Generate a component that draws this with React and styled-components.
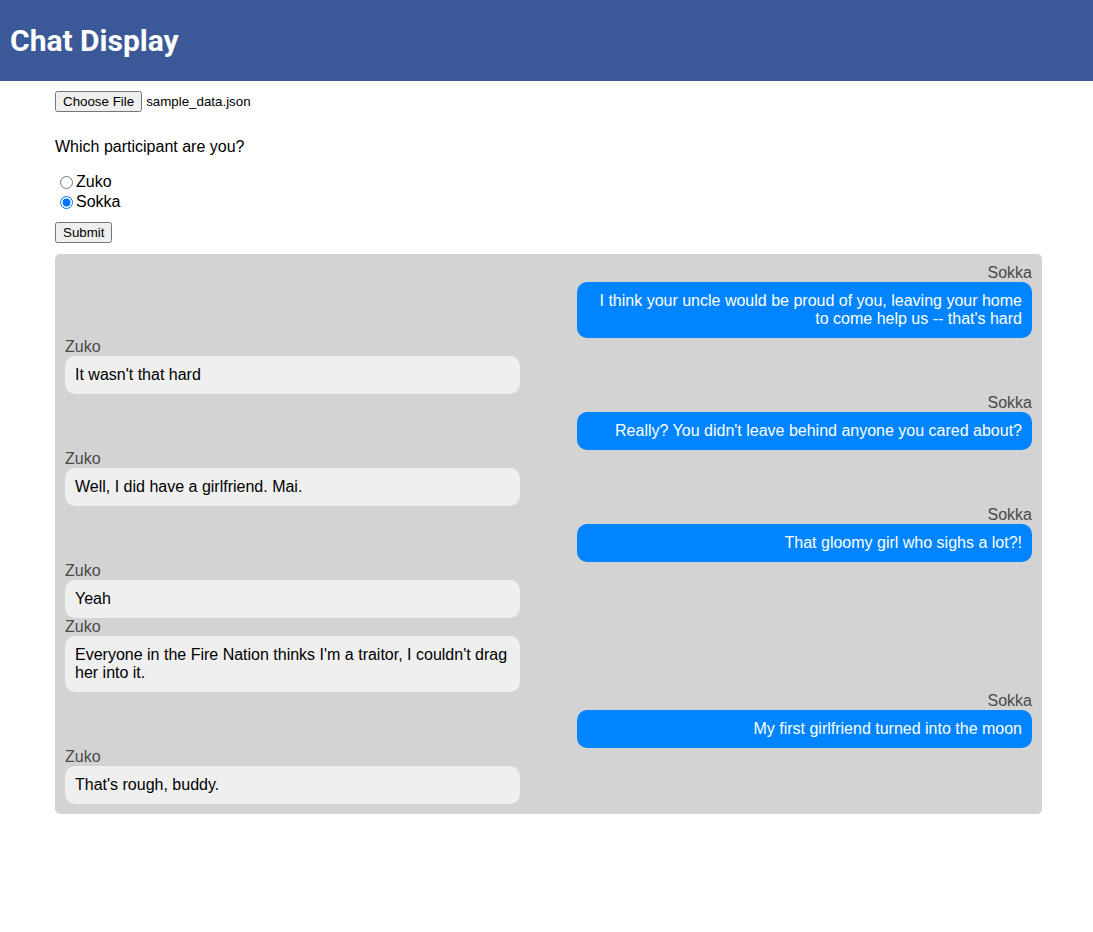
import React from 'react';
import styled, { createGlobalStyle } from 'styled-components';

const messages = [
    { sender: 'Sokka', text: "I think your uncle would be proud of you, leaving your home to come help us -- that's hard" },
    { sender: 'Zuko', text: "It wasn't that hard" },
    { sender: 'Sokka', text: "Really? You didn't leave behind anyone you cared about?" },
    { sender: 'Zuko', text: 'Well, I did have a girlfriend. Mai.' },
    { sender: 'Sokka', text: 'That gloomy girl who sighs a lot?!' },
    { sender: 'Zuko', text: 'Yeah' },
    { sender: 'Zuko', text: "Everyone in the Fire Nation thinks I'm a traitor, I couldn't drag her into it." },
    { sender: 'Sokka', text: 'My first girlfriend turned into the moon' },
    { sender: 'Zuko', text: "That's rough, buddy." },
];

const me = 'Sokka';

export default () => {
    return (
        <>
            <GlobalStyle />
            <Header>
                <Title>Chat Display</Title>
            </Header>
            <Main>
                <FileRow>
                    <FileButton type="button">Choose File</FileButton>
                    <FileName>sample_data.json</FileName>
                </FileRow>
                <Prompt>Which participant are you?</Prompt>
                <RadioList>
                    <label><input type="radio" name="who" value="Zuko" />Zuko</label>
                    <label><input type="radio" name="who" value="Sokka" defaultChecked />Sokka</label>
                </RadioList>
                <SubmitButton type="button">Submit</SubmitButton>
                <ChatBox>
                    {messages.map((m, i) => (
                        <Message key={i} mine={m.sender === me ? 1 : 0}>
                            <Sender>{m.sender}</Sender>
                            <Bubble mine={m.sender === me ? 1 : 0}>{m.text}</Bubble>
                        </Message>
                    ))}
                </ChatBox>
            </Main>
        </>
    );
};

const GlobalStyle = createGlobalStyle`
    body {
        margin: 0;
        font-family: "Liberation Sans", Arial, sans-serif;
        background: #fff;
    }
`;

const Header = styled.header`
    height: 81px;
    background-color: #3b5998;
    display: flex;
    align-items: center;
    padding: 0 10px;
`;
const Title = styled.h1`
    margin: 0;
    color: #fff;
    font-family: Roboto, sans-serif;
    font-weight: 700;
    font-size: 30px;
`;
const Main = styled.main`
    padding: 10px 51px 20px 55px;
`;
const FileRow = styled.div`
    display: flex;
    align-items: center;
    gap: 4px;
    font-size: 13.33px;
`;
const FileButton = styled.button`
    font-family: "Liberation Sans", Arial, sans-serif;
    font-size: 13.33px;
    margin: 0;
`;
const FileName = styled.span`
    color: #000;
`;
const Prompt = styled.p`
    margin: 26px 0 16px;
    font-size: 16px;
`;
const RadioList = styled.div`
    display: flex;
    flex-direction: column;
    font-size: 16px;
    label {
        display: flex;
        align-items: center;
        height: 20px;
    }
    input { margin: 0 3px 0 5px; }
`;
const SubmitButton = styled.button`
    font-family: "Liberation Sans", Arial, sans-serif;
    font-size: 13.33px;
    margin: 10px 0 11px;
`;
const ChatBox = styled.section`
    background-color: #d3d3d3;
    border-radius: 5px;
    padding: 10px;
    display: flex;
    flex-direction: column;
`;
const Message = styled.div`
    display: flex;
    flex-direction: column;
    align-items: ${p => p.mine ? 'flex-end' : 'flex-start'};
`;
const Sender = styled.div`
    color: #4a4a4a;
    font-size: 16px;
    line-height: 18px;
`;
const Bubble = styled.div`
    width: 47.1%;
    box-sizing: border-box;
    padding: 10px;
    border-radius: 10px;
    font-size: 16px;
    line-height: 18px;
    text-align: ${p => p.mine ? 'right' : 'left'};
    background-color: ${p => p.mine ? '#0084ff' : '#efefef'};
    color: ${p => p.mine ? '#fff' : '#000'};
`;
